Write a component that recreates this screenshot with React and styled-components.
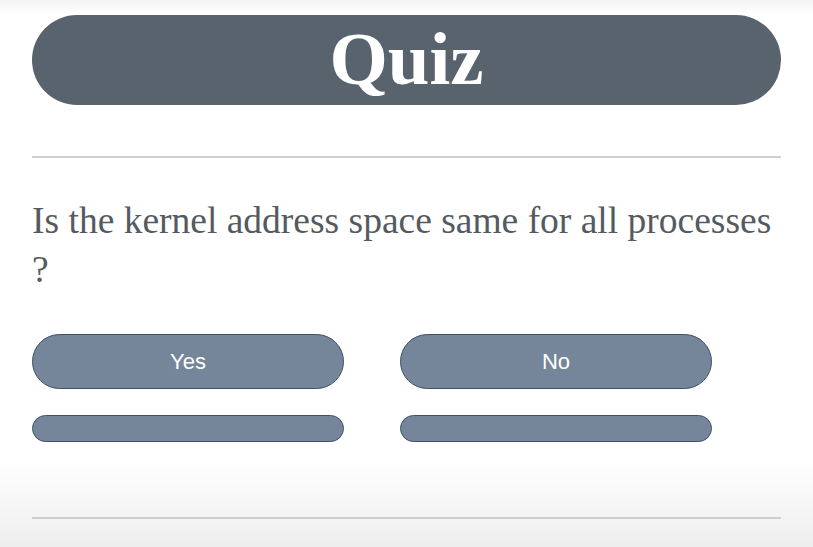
import React from "react";
import styled, { createGlobalStyle } from "styled-components";

const GlobalStyle = createGlobalStyle`
  html, body {
    margin: 0;
    padding: 0;
  }
  body {
    min-height: 547px;
    background: linear-gradient(
      to bottom,
      #f3f3f3 0px,
      #ffffff 14px,
      #ffffff 460px,
      #eeeeee 547px
    );
    font-family: "Liberation Serif", "Times New Roman", serif;
  }
`;

const Page = styled.div`
  padding: 15px 32px 0 32px;
  display: flex;
  flex-direction: column;
`;

const Header = styled.div`
  height: 90px;
  border-radius: 45px;
  background: #59636d;
  display: flex;
  align-items: center;
  justify-content: center;
`;

const Title = styled.h1`
  margin: 0;
  font-family: "Liberation Serif", "Times New Roman", serif;
  font-weight: 700;
  font-size: 75px;
  line-height: 1;
  color: #ffffff;
  transform: translateY(-2px);
`;

const Divider = styled.hr`
  margin: ${(p) => p.$top}px 0 0 0;
  border: none;
  height: 2px;
  background: #cfcfcf;
`;

const Question = styled.p`
  margin: 38px 0 0 0;
  font-size: 37.5px;
  line-height: 49px;
  color: #555a60;
`;

const Options = styled.div`
  margin-top: 40px;
  display: grid;
  grid-template-columns: 312px 312px;
  column-gap: 56px;
  row-gap: 26px;
`;

const Option = styled.button`
  height: ${(p) => (p.$small ? 27 : 55)}px;
  border-radius: 28px;
  border: 1px solid #3f5068;
  background: #75869a;
  color: #ffffff;
  font-family: "Liberation Sans", Arial, sans-serif;
  font-size: 22px;
  padding: 0;
  cursor: pointer;
`;

export default function App() {
  return (
    <>
      <GlobalStyle />
      <Page>
        <Header>
          <Title>Quiz</Title>
        </Header>
        <Divider $top={51} />
        <Question>Is the kernel address space same for all processes ?</Question>
        <Options>
          <Option>Yes</Option>
          <Option>No</Option>
          <Option $small />
          <Option $small />
        </Options>
        <Divider $top={75} />
      </Page>
    </>
  );
}
